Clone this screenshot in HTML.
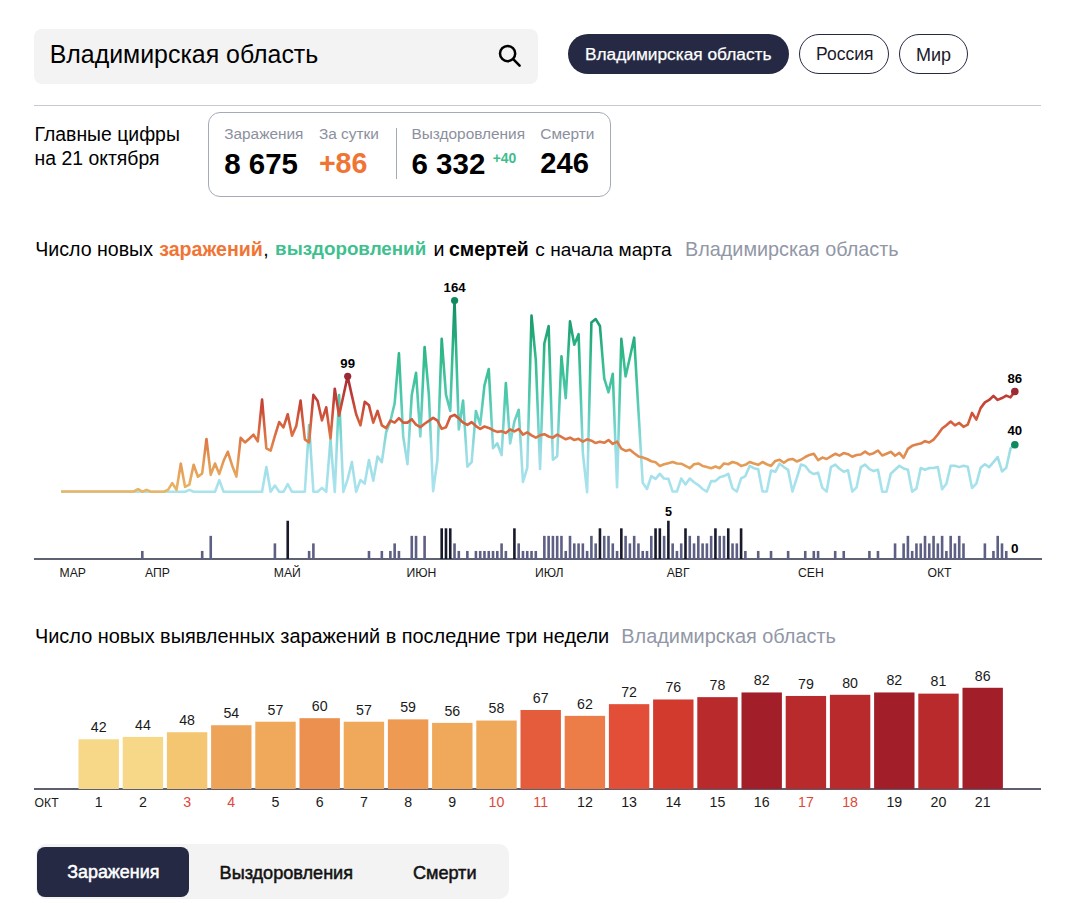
<!DOCTYPE html>
<html><head><meta charset="utf-8">
<style>
html,body{margin:0;padding:0;background:#fff;width:1068px;height:903px;overflow:hidden;position:relative;font-family:"Liberation Sans",sans-serif;color:#000}
.a{position:absolute;white-space:nowrap}
.t{position:absolute;white-space:nowrap;line-height:1}
svg text{font-family:"Liberation Sans",sans-serif}
.bl{font-size:14.2px;fill:#1a1a1a}
</style></head><body>
<div class="a" style="left:34px;top:29px;width:504px;height:55px;background:#f3f3f3;border-radius:8px"></div>
<div class="t" style="left:49.7px;top:42.3px;font-size:24.9px;color:#000">Владимирская область</div>
<svg class="a" style="left:496px;top:42px" width="28" height="28" viewBox="0 0 28 28"><circle cx="11.6" cy="11.6" r="7.6" fill="none" stroke="#000" stroke-width="2.5"/><line x1="17.2" y1="17.2" x2="23.6" y2="23.6" stroke="#000" stroke-width="2.6" stroke-linecap="round"/></svg>
<div class="a" style="left:568px;top:34px;width:221px;height:40px;background:#262944;border-radius:20px"></div>
<div class="t" style="left:585px;top:45.5px;font-size:17.3px;color:#fff;-webkit-text-stroke:0.25px #fff">Владимирская область</div>
<div class="a" style="left:799px;top:34px;width:88px;height:38px;border:1px solid #262944;border-radius:20px"></div>
<div class="t" style="left:816px;top:45.5px;font-size:17.5px;color:#1a1a2a">Россия</div>
<div class="a" style="left:899px;top:34px;width:67px;height:38px;border:1px solid #262944;border-radius:20px"></div>
<div class="t" style="left:916px;top:45.5px;font-size:18px;color:#1a1a2a">Мир</div>
<div class="a" style="left:34px;top:105px;width:1007px;height:1px;background:#c5c9d4"></div>
<div class="t" style="left:34.6px;top:125px;font-size:19.4px">Главные цифры</div>
<div class="t" style="left:34.6px;top:149px;font-size:19.4px">на 21 октября</div>
<div class="a" style="left:208px;top:112px;width:401px;height:83px;border:1px solid #a5aab7;border-radius:12px"></div>
<div class="t" style="left:224.2px;top:126.3px;font-size:15.4px;color:#8c909e">Заражения</div>
<div class="t" style="left:318.9px;top:126.3px;font-size:15.4px;color:#8c909e">За сутки</div>
<div class="t" style="left:411.5px;top:126.3px;font-size:15.4px;color:#8c909e">Выздоровления</div>
<div class="t" style="left:540.3px;top:126.3px;font-size:15.4px;color:#8c909e">Смерти</div>
<div class="t" style="left:224.2px;top:148.5px;font-size:29.5px;font-weight:bold">8 675</div>
<div class="t" style="left:318.9px;top:148.5px;font-size:28.6px;font-weight:bold;color:#f07535">+86</div>
<div class="t" style="left:411.5px;top:148.5px;font-size:29.5px;font-weight:bold">6 332</div>
<div class="t" style="left:492.7px;top:152px;font-size:13.9px;font-weight:bold;color:#3dbd8c">+40</div>
<div class="t" style="left:540.3px;top:148.5px;font-size:29.2px;font-weight:bold">246</div>
<div class="a" style="left:395.5px;top:128px;width:1px;height:51px;background:#a5aab7"></div>

<div class="t" style="left:35.2px;top:240px;font-size:19.6px">Число новых</div>
<div class="t" style="left:159.2px;top:240px;font-size:19.6px;font-weight:bold;color:#f07535">заражений</div>
<div class="t" style="left:263.3px;top:240px;font-size:19.6px">,</div>
<div class="t" style="left:275.1px;top:240px;font-size:18.8px;font-weight:bold;color:#3fc08f">выздоровлений</div>
<div class="t" style="left:433.4px;top:240px;font-size:19.6px">и</div>
<div class="t" style="left:449px;top:240px;font-size:19.4px;font-weight:bold">смертей</div>
<div class="t" style="left:535.3px;top:240px;font-size:19.1px">с начала марта</div>
<div class="t" style="left:685.1px;top:240px;font-size:19.8px;color:#9197a6">Владимирская область</div>

<svg class="a" style="left:0;top:0" width="1068" height="903" viewBox="0 0 1068 903">
<defs>
<linearGradient id="gi" gradientUnits="userSpaceOnUse" x1="0" y1="491.5" x2="0" y2="376">
<stop offset="0" stop-color="#eab566"/><stop offset="0.25" stop-color="#e39a55"/><stop offset="0.5" stop-color="#dc6e42"/><stop offset="0.75" stop-color="#c84535"/><stop offset="1" stop-color="#a82a36"/></linearGradient>
<linearGradient id="gr" gradientUnits="userSpaceOnUse" x1="0" y1="491.5" x2="0" y2="300">
<stop offset="0" stop-color="#a9e3ee"/><stop offset="0.2" stop-color="#9ddde6"/><stop offset="0.35" stop-color="#6fd3c8"/><stop offset="0.5" stop-color="#4cc8ab"/><stop offset="0.7" stop-color="#33bb8c"/><stop offset="1" stop-color="#0f8d60"/></linearGradient>
</defs>
<rect x="34" y="558" width="1008" height="2" fill="#5f6275"/>
<rect x="141.01" y="550.95" width="2.6" height="8.05" fill="#5d6084"/>
<rect x="200.89" y="550.95" width="2.6" height="8.05" fill="#5d6084"/>
<rect x="209.44" y="535.85" width="2.6" height="23.15" fill="#5d6084"/>
<rect x="273.60" y="543.40" width="2.6" height="15.60" fill="#5d6084"/>
<rect x="286.43" y="520.75" width="2.6" height="38.25" fill="#181a2c"/>
<rect x="307.82" y="550.95" width="2.6" height="8.05" fill="#5d6084"/>
<rect x="312.09" y="543.40" width="2.6" height="15.60" fill="#5d6084"/>
<rect x="367.69" y="550.95" width="2.6" height="8.05" fill="#5d6084"/>
<rect x="380.53" y="550.95" width="2.6" height="8.05" fill="#5d6084"/>
<rect x="389.08" y="550.95" width="2.6" height="8.05" fill="#5d6084"/>
<rect x="393.36" y="543.40" width="2.6" height="15.60" fill="#5d6084"/>
<rect x="397.63" y="550.95" width="2.6" height="8.05" fill="#5d6084"/>
<rect x="410.46" y="535.85" width="2.6" height="23.15" fill="#5d6084"/>
<rect x="414.74" y="535.85" width="2.6" height="23.15" fill="#5d6084"/>
<rect x="423.30" y="535.85" width="2.6" height="23.15" fill="#5d6084"/>
<rect x="440.40" y="528.30" width="2.6" height="30.70" fill="#181a2c"/>
<rect x="444.68" y="528.30" width="2.6" height="30.70" fill="#181a2c"/>
<rect x="448.96" y="528.30" width="2.6" height="30.70" fill="#181a2c"/>
<rect x="453.23" y="543.40" width="2.6" height="15.60" fill="#5d6084"/>
<rect x="457.51" y="550.95" width="2.6" height="8.05" fill="#5d6084"/>
<rect x="466.06" y="550.95" width="2.6" height="8.05" fill="#5d6084"/>
<rect x="474.62" y="550.95" width="2.6" height="8.05" fill="#5d6084"/>
<rect x="478.90" y="550.95" width="2.6" height="8.05" fill="#5d6084"/>
<rect x="483.17" y="550.95" width="2.6" height="8.05" fill="#5d6084"/>
<rect x="487.45" y="550.95" width="2.6" height="8.05" fill="#5d6084"/>
<rect x="491.73" y="550.95" width="2.6" height="8.05" fill="#5d6084"/>
<rect x="496.00" y="550.95" width="2.6" height="8.05" fill="#5d6084"/>
<rect x="500.28" y="543.40" width="2.6" height="15.60" fill="#5d6084"/>
<rect x="504.56" y="550.95" width="2.6" height="8.05" fill="#5d6084"/>
<rect x="513.11" y="528.30" width="2.6" height="30.70" fill="#181a2c"/>
<rect x="517.39" y="543.40" width="2.6" height="15.60" fill="#5d6084"/>
<rect x="521.67" y="550.95" width="2.6" height="8.05" fill="#5d6084"/>
<rect x="525.94" y="550.95" width="2.6" height="8.05" fill="#5d6084"/>
<rect x="530.22" y="550.95" width="2.6" height="8.05" fill="#5d6084"/>
<rect x="534.50" y="550.95" width="2.6" height="8.05" fill="#5d6084"/>
<rect x="543.05" y="535.85" width="2.6" height="23.15" fill="#5d6084"/>
<rect x="547.33" y="535.85" width="2.6" height="23.15" fill="#5d6084"/>
<rect x="551.61" y="535.85" width="2.6" height="23.15" fill="#5d6084"/>
<rect x="555.88" y="535.85" width="2.6" height="23.15" fill="#5d6084"/>
<rect x="560.16" y="535.85" width="2.6" height="23.15" fill="#5d6084"/>
<rect x="564.44" y="550.95" width="2.6" height="8.05" fill="#5d6084"/>
<rect x="568.71" y="535.85" width="2.6" height="23.15" fill="#5d6084"/>
<rect x="572.99" y="543.40" width="2.6" height="15.60" fill="#5d6084"/>
<rect x="577.27" y="543.40" width="2.6" height="15.60" fill="#5d6084"/>
<rect x="581.54" y="543.40" width="2.6" height="15.60" fill="#5d6084"/>
<rect x="585.82" y="550.95" width="2.6" height="8.05" fill="#5d6084"/>
<rect x="590.10" y="535.85" width="2.6" height="23.15" fill="#5d6084"/>
<rect x="594.38" y="543.40" width="2.6" height="15.60" fill="#5d6084"/>
<rect x="598.65" y="528.30" width="2.6" height="30.70" fill="#181a2c"/>
<rect x="602.93" y="535.85" width="2.6" height="23.15" fill="#5d6084"/>
<rect x="607.21" y="535.85" width="2.6" height="23.15" fill="#5d6084"/>
<rect x="611.48" y="543.40" width="2.6" height="15.60" fill="#5d6084"/>
<rect x="615.76" y="550.95" width="2.6" height="8.05" fill="#5d6084"/>
<rect x="620.04" y="528.30" width="2.6" height="30.70" fill="#181a2c"/>
<rect x="624.31" y="535.85" width="2.6" height="23.15" fill="#5d6084"/>
<rect x="628.59" y="543.40" width="2.6" height="15.60" fill="#5d6084"/>
<rect x="632.87" y="535.85" width="2.6" height="23.15" fill="#5d6084"/>
<rect x="637.14" y="543.40" width="2.6" height="15.60" fill="#5d6084"/>
<rect x="641.42" y="550.95" width="2.6" height="8.05" fill="#5d6084"/>
<rect x="645.70" y="550.95" width="2.6" height="8.05" fill="#5d6084"/>
<rect x="649.98" y="535.85" width="2.6" height="23.15" fill="#5d6084"/>
<rect x="654.25" y="528.30" width="2.6" height="30.70" fill="#181a2c"/>
<rect x="658.53" y="528.30" width="2.6" height="30.70" fill="#181a2c"/>
<rect x="662.81" y="535.85" width="2.6" height="23.15" fill="#5d6084"/>
<rect x="667.08" y="520.75" width="2.6" height="38.25" fill="#181a2c"/>
<rect x="671.36" y="543.40" width="2.6" height="15.60" fill="#5d6084"/>
<rect x="675.64" y="550.95" width="2.6" height="8.05" fill="#5d6084"/>
<rect x="679.91" y="543.40" width="2.6" height="15.60" fill="#5d6084"/>
<rect x="684.19" y="528.30" width="2.6" height="30.70" fill="#181a2c"/>
<rect x="688.47" y="535.85" width="2.6" height="23.15" fill="#5d6084"/>
<rect x="692.75" y="543.40" width="2.6" height="15.60" fill="#5d6084"/>
<rect x="697.02" y="535.85" width="2.6" height="23.15" fill="#5d6084"/>
<rect x="701.30" y="543.40" width="2.6" height="15.60" fill="#5d6084"/>
<rect x="705.58" y="543.40" width="2.6" height="15.60" fill="#5d6084"/>
<rect x="709.85" y="535.85" width="2.6" height="23.15" fill="#5d6084"/>
<rect x="714.13" y="528.30" width="2.6" height="30.70" fill="#181a2c"/>
<rect x="718.41" y="535.85" width="2.6" height="23.15" fill="#5d6084"/>
<rect x="722.69" y="535.85" width="2.6" height="23.15" fill="#5d6084"/>
<rect x="726.96" y="528.30" width="2.6" height="30.70" fill="#181a2c"/>
<rect x="731.24" y="543.40" width="2.6" height="15.60" fill="#5d6084"/>
<rect x="735.52" y="543.40" width="2.6" height="15.60" fill="#5d6084"/>
<rect x="739.79" y="528.30" width="2.6" height="30.70" fill="#181a2c"/>
<rect x="744.07" y="550.95" width="2.6" height="8.05" fill="#5d6084"/>
<rect x="756.90" y="550.95" width="2.6" height="8.05" fill="#5d6084"/>
<rect x="769.73" y="550.95" width="2.6" height="8.05" fill="#5d6084"/>
<rect x="786.84" y="550.95" width="2.6" height="8.05" fill="#5d6084"/>
<rect x="803.95" y="550.95" width="2.6" height="8.05" fill="#5d6084"/>
<rect x="812.50" y="550.95" width="2.6" height="8.05" fill="#5d6084"/>
<rect x="816.78" y="550.95" width="2.6" height="8.05" fill="#5d6084"/>
<rect x="833.89" y="550.95" width="2.6" height="8.05" fill="#5d6084"/>
<rect x="842.44" y="550.95" width="2.6" height="8.05" fill="#5d6084"/>
<rect x="868.10" y="550.95" width="2.6" height="8.05" fill="#5d6084"/>
<rect x="876.66" y="550.95" width="2.6" height="8.05" fill="#5d6084"/>
<rect x="893.76" y="543.40" width="2.6" height="15.60" fill="#5d6084"/>
<rect x="902.32" y="543.40" width="2.6" height="15.60" fill="#5d6084"/>
<rect x="906.60" y="535.85" width="2.6" height="23.15" fill="#5d6084"/>
<rect x="910.87" y="550.95" width="2.6" height="8.05" fill="#5d6084"/>
<rect x="915.15" y="543.40" width="2.6" height="15.60" fill="#5d6084"/>
<rect x="919.43" y="543.40" width="2.6" height="15.60" fill="#5d6084"/>
<rect x="923.70" y="535.85" width="2.6" height="23.15" fill="#5d6084"/>
<rect x="927.98" y="543.40" width="2.6" height="15.60" fill="#5d6084"/>
<rect x="932.26" y="535.85" width="2.6" height="23.15" fill="#5d6084"/>
<rect x="936.54" y="543.40" width="2.6" height="15.60" fill="#5d6084"/>
<rect x="940.81" y="535.85" width="2.6" height="23.15" fill="#5d6084"/>
<rect x="945.09" y="550.95" width="2.6" height="8.05" fill="#5d6084"/>
<rect x="949.37" y="535.85" width="2.6" height="23.15" fill="#5d6084"/>
<rect x="953.64" y="543.40" width="2.6" height="15.60" fill="#5d6084"/>
<rect x="957.92" y="535.85" width="2.6" height="23.15" fill="#5d6084"/>
<rect x="962.20" y="543.40" width="2.6" height="15.60" fill="#5d6084"/>
<rect x="983.58" y="543.40" width="2.6" height="15.60" fill="#5d6084"/>
<rect x="992.14" y="550.95" width="2.6" height="8.05" fill="#5d6084"/>
<rect x="996.41" y="535.85" width="2.6" height="23.15" fill="#5d6084"/>
<rect x="1000.69" y="543.40" width="2.6" height="15.60" fill="#5d6084"/>
<rect x="1004.97" y="550.95" width="2.6" height="8.05" fill="#5d6084"/>
<path d="M61.05,491.69 L65.33,491.69 L69.60,491.69 L73.88,491.69 L78.16,491.69 L82.44,491.69 L86.71,491.69 L90.99,491.69 L95.27,491.69 L99.54,491.69 L103.82,491.69 L108.10,491.69 L112.37,491.69 L116.65,491.69 L120.93,491.69 L125.20,491.69 L129.48,491.69 L133.76,491.69 L138.04,491.69 L142.31,491.69 L146.59,491.69 L150.87,491.69 L155.14,491.69 L159.42,491.69 L163.70,491.69 L167.97,491.69 L172.25,491.69 L176.53,491.69 L180.81,491.69 L185.08,491.69 L189.36,489.89 L193.64,491.69 L197.91,491.69 L202.19,491.69 L206.47,491.69 L210.75,491.69 L215.02,491.69 L219.30,480.16 L223.58,491.78 L227.85,491.78 L232.13,491.78 L236.41,491.78 L240.68,491.78 L244.96,491.78 L249.24,491.78 L253.51,491.78 L257.79,491.78 L262.07,491.78 L266.35,466.98 L270.62,491.78 L274.90,485.58 L279.18,491.78 L283.45,491.78 L287.73,484.03 L292.01,491.78 L296.29,491.78 L300.56,491.78 L304.84,491.78 L309.12,425.12 L313.39,491.78 L317.67,491.78 L321.95,487.91 L326.22,491.78 L330.50,439.94 L334.78,491.88 L339.06,394.93 L343.33,491.88 L347.61,479.42 L351.89,462.11 L356.16,491.88 L360.44,480.11 L364.72,483.57 L368.99,460.03 L373.27,480.80 L377.55,456.57 L381.83,462.11 L386.10,432.33 L390.38,421.25 L394.66,403.24 L398.93,353.38 L403.21,436.48 L407.49,464.18 L411.76,394.93 L416.04,372.77 L420.32,436.51 L424.60,346.98 L428.87,394.65 L433.15,491.16 L437.43,459.77 L441.70,338.84 L445.98,394.65 L450.26,410.93 L454.53,300.47 L458.81,429.53 L463.09,400.47 L467.37,466.74 L471.64,462.09 L475.92,410.93 L480.20,424.88 L484.47,385.35 L488.75,369.07 L493.03,448.14 L497.30,443.49 L501.58,455.12 L505.86,383.02 L510.14,443.49 L514.41,421.40 L518.69,409.77 L522.97,481.86 L527.24,467.91 L531.52,315.58 L535.80,359.77 L540.07,469.07 L544.35,343.49 L548.63,326.05 L552.90,459.77 L557.18,456.28 L561.46,356.28 L565.74,398.14 L570.01,321.40 L574.29,344.65 L578.57,334.19 L582.84,452.79 L587.12,492.33 L591.40,322.56 L595.67,319.07 L599.95,326.05 L604.23,378.37 L608.51,392.33 L612.78,373.72 L617.06,487.21 L621.34,338.84 L625.61,376.51 L629.89,357.44 L634.17,337.67 L638.44,410.93 L642.72,482.81 L647.00,488.99 L651.28,476.07 L655.55,478.88 L659.83,473.82 L664.11,478.54 L668.38,478.88 L672.66,491.57 L676.94,491.57 L681.21,478.54 L685.49,484.49 L689.77,478.54 L694.05,482.25 L698.32,485.06 L702.60,488.99 L706.88,491.57 L711.15,481.12 L715.43,481.12 L719.71,477.19 L723.99,476.07 L728.26,473.82 L732.54,488.43 L736.82,491.57 L741.09,478.31 L745.37,476.07 L749.65,465.96 L753.92,468.20 L758.20,469.33 L762.48,491.57 L766.75,491.57 L771.03,470.45 L775.31,471.80 L779.59,463.71 L783.86,467.08 L788.14,469.89 L792.42,491.57 L796.69,478.31 L800.97,464.61 L805.25,465.96 L809.52,471.57 L813.80,474.04 L818.08,472.70 L822.36,487.87 L826.63,491.57 L830.91,467.08 L835.19,464.61 L839.46,468.76 L843.74,471.80 L848.02,470.22 L852.29,491.57 L856.57,487.30 L860.85,467.08 L865.13,464.61 L869.40,469.10 L873.68,471.09 L877.96,469.76 L882.23,491.70 L886.51,491.70 L890.79,473.75 L895.06,469.76 L899.34,465.77 L903.62,468.43 L907.90,469.76 L912.17,491.70 L916.45,488.38 L920.73,468.03 L925.00,469.76 L929.28,468.03 L933.56,468.03 L937.84,467.10 L942.11,489.31 L946.39,483.72 L950.67,465.68 L954.94,465.68 L959.22,467.12 L963.50,465.68 L967.77,466.69 L972.05,487.99 L976.33,483.67 L980.61,467.84 L984.88,464.24 L989.16,467.12 L993.44,462.09 L997.71,457.05 L1001.99,471.44 L1006.27,467.84 L1010.54,448.42 L1014.82,444.82" fill="none" stroke="url(#gr)" stroke-width="2.6" stroke-linejoin="round"/>
<path d="M61.05,491.50 L65.33,491.50 L69.60,491.50 L73.88,491.50 L78.16,491.50 L82.44,491.50 L86.71,491.50 L90.99,491.50 L95.27,491.50 L99.54,491.50 L103.82,491.50 L108.10,491.50 L112.37,491.50 L116.65,491.50 L120.93,491.50 L125.20,491.50 L129.48,491.50 L133.76,491.50 L138.04,489.14 L142.31,491.69 L146.59,489.89 L150.87,491.69 L155.14,491.69 L159.42,491.69 L163.70,491.69 L167.97,489.89 L172.25,483.15 L176.53,489.89 L180.81,463.67 L185.08,486.89 L189.36,484.64 L193.64,464.72 L197.91,476.70 L202.19,473.41 L206.47,438.95 L210.75,474.91 L215.02,463.57 L219.30,473.95 L223.58,460.78 L227.85,451.78 L232.13,465.43 L236.41,476.59 L240.68,437.83 L244.96,442.48 L249.24,438.76 L253.51,434.73 L257.79,441.40 L262.07,399.53 L266.35,448.37 L270.62,450.70 L274.90,435.97 L279.18,422.02 L283.45,427.44 L287.73,414.26 L292.01,435.66 L296.29,425.89 L300.56,400.62 L304.84,439.38 L309.12,442.48 L313.39,394.88 L317.67,401.09 L321.95,420.47 L326.22,407.29 L330.50,438.56 L334.78,388.70 L339.06,415.71 L343.33,395.97 L347.61,376.23 L351.89,395.62 L356.16,414.32 L360.44,425.40 L364.72,401.86 L368.99,405.32 L373.27,422.63 L377.55,410.86 L381.83,425.40 L386.10,428.17 L390.38,420.55 L394.66,422.63 L398.93,418.20 L403.21,422.63 L407.49,422.63 L411.76,419.17 L416.04,424.71 L420.32,427.21 L424.60,423.72 L428.87,420.93 L433.15,417.91 L437.43,420.70 L441.70,428.84 L445.98,427.21 L450.26,416.74 L454.53,414.88 L458.81,418.37 L463.09,422.56 L467.37,424.88 L471.64,422.09 L475.92,426.05 L480.20,428.84 L484.47,426.51 L488.75,427.91 L493.03,430.23 L497.30,431.86 L501.58,431.16 L505.86,433.02 L510.14,429.53 L514.41,431.40 L518.69,429.07 L522.97,434.65 L527.24,432.33 L531.52,435.35 L535.80,437.67 L540.07,435.35 L544.35,434.19 L548.63,436.51 L552.90,437.67 L557.18,434.65 L561.46,436.98 L565.74,439.30 L570.01,437.67 L574.29,440.00 L578.57,438.84 L582.84,441.63 L587.12,439.30 L591.40,440.70 L595.67,443.02 L599.95,441.63 L604.23,442.79 L608.51,440.00 L612.78,443.95 L617.06,441.63 L621.34,448.60 L625.61,450.93 L629.89,449.77 L634.17,453.26 L638.44,456.40 L642.72,457.53 L647.00,458.99 L651.28,461.24 L655.55,462.36 L659.83,465.96 L664.11,464.27 L668.38,463.15 L672.66,462.02 L676.94,463.48 L681.21,463.71 L685.49,465.96 L689.77,468.20 L694.05,464.27 L698.32,463.48 L702.60,465.96 L706.88,467.08 L711.15,468.20 L715.43,466.52 L719.71,468.20 L723.99,463.48 L728.26,464.27 L732.54,462.02 L736.82,463.15 L741.09,465.96 L745.37,464.83 L749.65,462.02 L753.92,463.48 L758.20,464.83 L762.48,462.02 L766.75,464.27 L771.03,465.96 L775.31,460.90 L779.59,459.78 L783.86,462.81 L788.14,459.78 L792.42,458.99 L796.69,461.46 L800.97,459.78 L805.25,456.97 L809.52,454.94 L813.80,453.82 L818.08,460.11 L822.36,457.53 L826.63,458.99 L830.91,456.40 L835.19,453.82 L839.46,455.62 L843.74,453.03 L848.02,454.16 L852.29,456.74 L856.57,454.94 L860.85,454.49 L865.13,451.57 L869.40,454.47 L873.68,453.14 L877.96,450.48 L882.23,455.53 L886.51,453.80 L890.79,451.81 L895.06,455.80 L899.34,452.87 L903.62,457.79 L907.90,448.88 L912.17,445.82 L916.45,444.49 L920.73,443.56 L925.00,441.17 L929.28,442.50 L933.56,439.57 L937.84,434.52 L942.11,428.54 L946.39,425.21 L950.67,421.49 L954.94,425.40 L959.22,422.95 L963.50,426.83 L967.77,424.68 L972.05,412.88 L976.33,419.64 L980.61,408.13 L984.88,402.37 L989.16,399.93 L993.44,395.90 L997.71,399.93 L1001.99,398.06 L1006.27,395.61 L1010.54,397.34 L1014.82,391.58" fill="none" stroke="url(#gi)" stroke-width="2.6" stroke-linejoin="round"/>
<circle cx="347.7" cy="376.3" r="3.6" fill="#9c2933"/>
<text x="347.7" y="368" text-anchor="middle" font-size="13.2" font-weight="bold">99</text>
<circle cx="454.6" cy="300.5" r="3.6" fill="#0f8a5e"/>
<text x="454.6" y="292" text-anchor="middle" font-size="13.2" font-weight="bold">164</text>
<circle cx="1014.8" cy="391.5" r="3.8" fill="#9c2933"/>
<text x="1014.8" y="383" text-anchor="middle" font-size="13.2" font-weight="bold">86</text>
<circle cx="1014.8" cy="444.8" r="3.8" fill="#0f8a5e"/>
<text x="1014.8" y="435.3" text-anchor="middle" font-size="13.2" font-weight="bold">40</text>
<text x="668.4" y="516" text-anchor="middle" font-size="12.6" font-weight="bold">5</text>
<text x="1014.8" y="552.5" text-anchor="middle" font-size="13.5" font-weight="bold">0</text>
<g font-size="12.2" fill="#1a1a1a">
<text x="59.5" y="577">МАР</text>
<text x="145" y="577">АПР</text>
<text x="273.8" y="577">МАЙ</text>
<text x="406.4" y="577">ИЮН</text>
<text x="534.9" y="577">ИЮЛ</text>
<text x="666.7" y="577">АВГ</text>
<text x="798" y="577">СЕН</text>
<text x="927.5" y="577">ОКТ</text>
</g>
<rect x="34" y="788" width="1007" height="2" fill="#5e5f6e"/>
<rect x="78.50" y="739.26" width="40.4" height="49.74" fill="#f6d888"/>
<text x="98.70" y="732.06" text-anchor="middle" class="bl">42</text>
<text x="98.70" y="807" text-anchor="middle" class="bl" style="fill:#1a1a1a">1</text>
<rect x="122.70" y="736.92" width="40.4" height="52.08" fill="#f6d888"/>
<text x="142.90" y="729.72" text-anchor="middle" class="bl">44</text>
<text x="142.90" y="807" text-anchor="middle" class="bl" style="fill:#1a1a1a">2</text>
<rect x="166.90" y="732.24" width="40.4" height="56.76" fill="#f4c672"/>
<text x="187.10" y="725.04" text-anchor="middle" class="bl">48</text>
<text x="187.10" y="807" text-anchor="middle" class="bl" style="fill:#e0473a">3</text>
<rect x="211.10" y="725.22" width="40.4" height="63.78" fill="#eea458"/>
<text x="231.30" y="718.02" text-anchor="middle" class="bl">54</text>
<text x="231.30" y="807" text-anchor="middle" class="bl" style="fill:#e0473a">4</text>
<rect x="255.30" y="721.71" width="40.4" height="67.29" fill="#f0a85a"/>
<text x="275.50" y="714.51" text-anchor="middle" class="bl">57</text>
<text x="275.50" y="807" text-anchor="middle" class="bl" style="fill:#1a1a1a">5</text>
<rect x="299.50" y="718.20" width="40.4" height="70.80" fill="#ec9050"/>
<text x="319.70" y="711.00" text-anchor="middle" class="bl">60</text>
<text x="319.70" y="807" text-anchor="middle" class="bl" style="fill:#1a1a1a">6</text>
<rect x="343.70" y="721.71" width="40.4" height="67.29" fill="#f0a85a"/>
<text x="363.90" y="714.51" text-anchor="middle" class="bl">57</text>
<text x="363.90" y="807" text-anchor="middle" class="bl" style="fill:#1a1a1a">7</text>
<rect x="387.90" y="719.37" width="40.4" height="69.63" fill="#ee9a52"/>
<text x="408.10" y="712.17" text-anchor="middle" class="bl">59</text>
<text x="408.10" y="807" text-anchor="middle" class="bl" style="fill:#1a1a1a">8</text>
<rect x="432.10" y="722.88" width="40.4" height="66.12" fill="#f0a85a"/>
<text x="452.30" y="715.68" text-anchor="middle" class="bl">56</text>
<text x="452.30" y="807" text-anchor="middle" class="bl" style="fill:#1a1a1a">9</text>
<rect x="476.30" y="720.54" width="40.4" height="68.46" fill="#f0a85a"/>
<text x="496.50" y="713.34" text-anchor="middle" class="bl">58</text>
<text x="496.50" y="807" text-anchor="middle" class="bl" style="fill:#e0473a">10</text>
<rect x="520.50" y="710.01" width="40.4" height="78.99" fill="#e45c3c"/>
<text x="540.70" y="702.81" text-anchor="middle" class="bl">67</text>
<text x="540.70" y="807" text-anchor="middle" class="bl" style="fill:#e0473a">11</text>
<rect x="564.70" y="715.86" width="40.4" height="73.14" fill="#ec7c48"/>
<text x="584.90" y="708.66" text-anchor="middle" class="bl">62</text>
<text x="584.90" y="807" text-anchor="middle" class="bl" style="fill:#1a1a1a">12</text>
<rect x="608.90" y="704.16" width="40.4" height="84.84" fill="#e24e38"/>
<text x="629.10" y="696.96" text-anchor="middle" class="bl">72</text>
<text x="629.10" y="807" text-anchor="middle" class="bl" style="fill:#1a1a1a">13</text>
<rect x="653.10" y="699.48" width="40.4" height="89.52" fill="#d23a2e"/>
<text x="673.30" y="692.28" text-anchor="middle" class="bl">76</text>
<text x="673.30" y="807" text-anchor="middle" class="bl" style="fill:#1a1a1a">14</text>
<rect x="697.30" y="697.14" width="40.4" height="91.86" fill="#b82a2c"/>
<text x="717.50" y="689.94" text-anchor="middle" class="bl">78</text>
<text x="717.50" y="807" text-anchor="middle" class="bl" style="fill:#1a1a1a">15</text>
<rect x="741.50" y="692.46" width="40.4" height="96.54" fill="#a21f2a"/>
<text x="761.70" y="685.26" text-anchor="middle" class="bl">82</text>
<text x="761.70" y="807" text-anchor="middle" class="bl" style="fill:#1a1a1a">16</text>
<rect x="785.70" y="695.97" width="40.4" height="93.03" fill="#b82a2c"/>
<text x="805.90" y="688.77" text-anchor="middle" class="bl">79</text>
<text x="805.90" y="807" text-anchor="middle" class="bl" style="fill:#e0473a">17</text>
<rect x="829.90" y="694.80" width="40.4" height="94.20" fill="#b82a2c"/>
<text x="850.10" y="687.60" text-anchor="middle" class="bl">80</text>
<text x="850.10" y="807" text-anchor="middle" class="bl" style="fill:#e0473a">18</text>
<rect x="874.10" y="692.46" width="40.4" height="96.54" fill="#a21f2a"/>
<text x="894.30" y="685.26" text-anchor="middle" class="bl">82</text>
<text x="894.30" y="807" text-anchor="middle" class="bl" style="fill:#1a1a1a">19</text>
<rect x="918.30" y="693.63" width="40.4" height="95.37" fill="#b82a2c"/>
<text x="938.50" y="686.43" text-anchor="middle" class="bl">81</text>
<text x="938.50" y="807" text-anchor="middle" class="bl" style="fill:#1a1a1a">20</text>
<rect x="962.50" y="687.78" width="40.4" height="101.22" fill="#a21f2a"/>
<text x="982.70" y="680.58" text-anchor="middle" class="bl">86</text>
<text x="982.70" y="807" text-anchor="middle" class="bl" style="fill:#1a1a1a">21</text>
<text x="34.6" y="807" font-size="12.2" fill="#1a1a1a">ОКТ</text>
</svg>

<div class="t" style="left:35px;top:627px;font-size:19.9px">Число новых выявленных заражений в последние три недели</div>
<div class="t" style="left:621.3px;top:627px;font-size:19.9px;color:#9197a6">Владимирская область</div>

<div class="a" style="left:35.5px;top:843.5px;width:473px;height:55.5px;background:#f3f3f3;border-radius:10px"></div>
<div class="a" style="left:37px;top:847px;width:152px;height:50px;background:#262944;border-radius:8px"></div>
<div class="t" style="left:67.2px;top:864px;font-size:17.9px;color:#fff;-webkit-text-stroke:0.5px #fff">Заражения</div>
<div class="t" style="left:219.6px;top:864px;font-size:18.1px;color:#111;-webkit-text-stroke:0.5px #111">Выздоровления</div>
<div class="t" style="left:412.9px;top:864px;font-size:18.1px;color:#111;-webkit-text-stroke:0.5px #111">Смерти</div>
</body></html>
